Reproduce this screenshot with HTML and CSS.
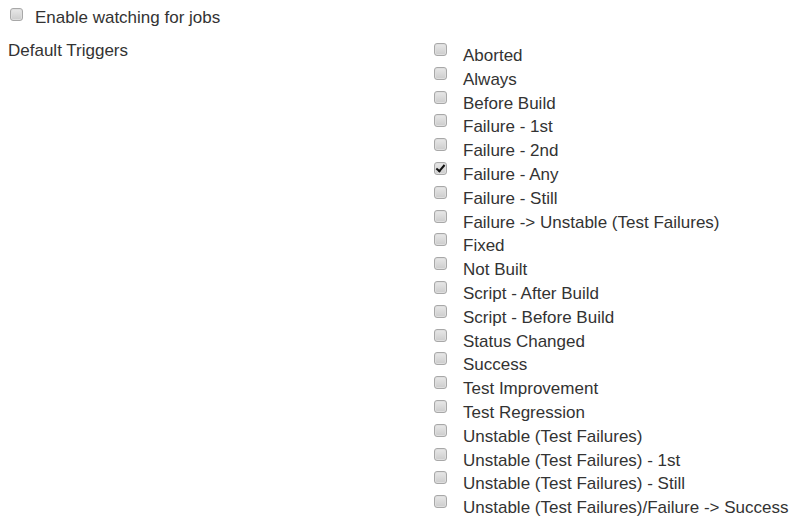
FILE: index.html
```html
<!DOCTYPE html>
<html>
<head>
<meta charset="utf-8">
<link rel="stylesheet" href="styles.css">
</head>
<body>
<div class="page">
  <label class="top-row"><span class="cb"></span><span class="top-text">Enable watching for jobs</span></label>
  <div class="section">
    <div class="section-label">Default Triggers</div>
    <ul class="triggers">
      <li><span class="cb"></span>Aborted</li>
      <li><span class="cb"></span>Always</li>
      <li><span class="cb"></span>Before Build</li>
      <li><span class="cb"></span>Failure - 1st</li>
      <li><span class="cb"></span>Failure - 2nd</li>
      <li><span class="cb checked"></span>Failure - Any</li>
      <li><span class="cb"></span>Failure - Still</li>
      <li><span class="cb"></span>Failure -&gt; Unstable (Test Failures)</li>
      <li><span class="cb"></span>Fixed</li>
      <li><span class="cb"></span>Not Built</li>
      <li><span class="cb"></span>Script - After Build</li>
      <li><span class="cb"></span>Script - Before Build</li>
      <li><span class="cb"></span>Status Changed</li>
      <li><span class="cb"></span>Success</li>
      <li><span class="cb"></span>Test Improvement</li>
      <li><span class="cb"></span>Test Regression</li>
      <li><span class="cb"></span>Unstable (Test Failures)</li>
      <li><span class="cb"></span>Unstable (Test Failures) - 1st</li>
      <li><span class="cb"></span>Unstable (Test Failures) - Still</li>
      <li><span class="cb"></span>Unstable (Test Failures)/Failure -&gt; Success</li>
    </ul>
  </div>
</div>
</body>
</html>
```
FILE: styles.css
```css
html, body {
  margin: 0;
  padding: 0;
  background: #ffffff;
}
body {
  font-family: "Liberation Sans", Arial, sans-serif;
  font-size: 17px;
  color: #333333;
}
.page {
  padding: 6px 0 0 0;
}
.top-row {
  display: flex;
  align-items: flex-start;
  padding-left: 10px;
  height: 24px;
  line-height: 24px;
}
.top-row .cb {
  margin-top: 2px;
}
.top-text {
  margin-left: 12px;
}
.cb {
  display: inline-block;
  box-sizing: border-box;
  width: 13px;
  height: 13px;
  border: 1px solid #a8a8a8;
  border-radius: 3px;
  background: linear-gradient(#e8e8e8, #cccccc);
  box-shadow: inset 0 0 0 1px #dedede;
  flex: none;
  position: relative;
}
.cb.checked::after {
  content: "";
  position: absolute;
  left: 3px;
  top: 0px;
  width: 3px;
  height: 7px;
  border: solid #111;
  border-width: 0 2px 2px 0;
  transform: rotate(40deg);
}
.section {
  display: grid;
  grid-template-columns: 434px 1fr;
  margin-top: 8px;
}
.section-label {
  padding-left: 8px;
  line-height: 24px;
  margin-top: 1px;
}
.triggers {
  list-style: none;
  margin: 6px 0 0 0;
  padding: 0;
}
.triggers li {
  display: flex;
  align-items: flex-start;
  height: 23.8px;
  line-height: 23.8px;
  white-space: nowrap;
}
.triggers .cb {
  margin-top: -1px;
  margin-right: 16px;
}
```
